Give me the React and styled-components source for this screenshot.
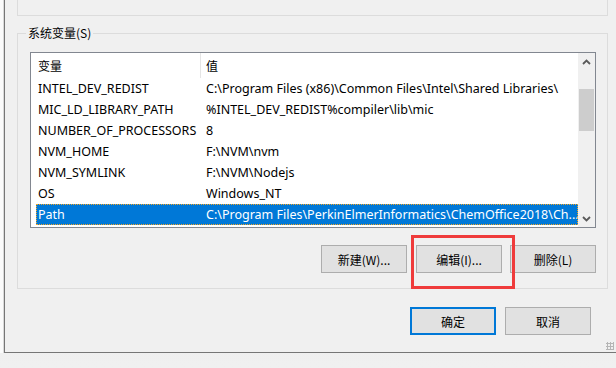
import React from "react";
import styled, { createGlobalStyle } from "styled-components";

const Global = createGlobalStyle`
  html, body { margin: 0; padding: 0; background: #f0f0f0; }
  body { font-family: "Noto Sans", "Noto Sans CJK SC", sans-serif; font-size: 12px; color: #000; }
  * { box-sizing: border-box; }
`;

const Page = styled.div`
  width: 616px;
  height: 368px;
  overflow: hidden;
  display: flex;
  flex-direction: column;
  background: linear-gradient(#c9c9c9, #ececec 60%, #f0f0f0);
`;

const Top = styled.div`
  display: flex;
  height: 353px;
`;

const BackStrip = styled.div`
  width: 4px;
  background: #fbfbfb;
  border-right: 1px solid #d9d9d9;
`;

const Window = styled.div`
  position: relative;
  flex: 1;
  background: #f0f0f0;
  border-left: 1px solid #767676;
  border-bottom: 1px solid #767676;
  padding: 0 8px 0 12px;
  display: flex;
  flex-direction: column;
`;

const PrevGroup = styled.div`
  height: 16px;
  border: 1px solid #dcdcdc;
  border-top: none;
`;

const Group = styled.div`
  position: relative;
  margin-top: 17px;
  border: 1px solid #dcdcdc;
  padding: 18px 11px 15px 12px;
  display: flex;
  flex-direction: column;
`;

const Legend = styled.span`
  position: absolute;
  top: -9px;
  left: 8px;
  padding: 0 2px;
  background: #f0f0f0;
  line-height: 16px;
  font-family: "Noto Sans CJK SC", sans-serif;
`;

const List = styled.div`
  height: 176px;
  border: 1px solid #828790;
  background: #fff;
  display: flex;
`;

const ListBody = styled.div`
  flex: 1;
  padding-left: 5px;
  display: flex;
  flex-direction: column;
  font-size: 12.5px;
`;

const Row = styled.div`
  display: grid;
  grid-template-columns: 164px 1fr;
  height: ${(p) => (p.$header ? "25px" : "21px")};
  align-items: center;
  white-space: nowrap;
  background: ${(p) => (p.$selected ? "#0078d7" : "transparent")};
  color: ${(p) => (p.$selected ? "#fff" : "#000")};
  outline: ${(p) => (p.$selected ? "1px dotted #f5a623" : "none")};
  outline-offset: -1px;
`;

const Cell = styled.div`
  overflow: hidden;
  height: 100%;
  display: flex;
  align-items: center;
  font-family: ${(p) => (p.$cjk ? '"Noto Sans CJK SC", sans-serif' : 'inherit')};
  font-size: ${(p) => (p.$cjk ? "12px" : "inherit")};
  border-left: ${(p) => (p.$divider ? "1px solid #e5e5e5" : "none")};
  padding-left: ${(p) => (p.$divider ? "5px" : p.$second ? "6px" : "2px")};
`;

const Scrollbar = styled.div`
  width: 17px;
  background: #f0f0f0;
  display: flex;
  flex-direction: column;
  align-items: center;
`;

const Arrow = styled.div`
  height: 17px;
  width: 17px;
  display: flex;
  align-items: center;
  justify-content: center;
`;

const Track = styled.div`
  flex: 1;
  width: 100%;
  padding: 19px 1px 0;
`;

const Thumb = styled.div`
  height: 42px;
  background: #cdcdcd;
`;

const ButtonRow = styled.div`
  display: flex;
  justify-content: flex-end;
  gap: 8px;
  margin-top: 17px;
`;

const Button = styled.button`
  width: 86px;
  height: 28px;
  background: #e1e1e1;
  border: ${(p) => (p.$default ? "2px solid #0078d7" : "1px solid #adadad")};
  font-family: "Noto Sans CJK SC", sans-serif;
  font-size: 12px;
  color: #000;
  padding: 0;
  margin-left: ${(p) => p.$ml || 0}px;
`;

const DialogButtons = styled(ButtonRow)`
  margin-top: 18px;
  gap: 9px;
  padding-right: 17px;
`;

const Annotation = styled.div`
  position: absolute;
  left: 406px;
  top: 235px;
  width: 104px;
  height: 54px;
  border: 3px solid #ef3b3b;
  pointer-events: none;
`;

const Grip = styled.div`
  position: absolute;
  right: 2px;
  bottom: 2px;
  width: 8px;
  height: 8px;
  background:
    radial-gradient(circle, #b5b5b5 1.1px, transparent 1.3px) 0 0 / 3px 3px;
`;

const Up = () => (
  <svg width="9" height="6" viewBox="0 0 9 6">
    <path d="M1 5 L4.5 1.5 L8 5" fill="none" stroke="#5a5a5a" strokeWidth="1.8" />
  </svg>
);
const Down = () => (
  <svg width="9" height="6" viewBox="0 0 9 6">
    <path d="M1 1 L4.5 4.5 L8 1" fill="none" stroke="#5a5a5a" strokeWidth="1.8" />
  </svg>
);

const vars = [
  ["INTEL_DEV_REDIST", "C:\\Program Files (x86)\\Common Files\\Intel\\Shared Libraries\\"],
  ["MIC_LD_LIBRARY_PATH", "%INTEL_DEV_REDIST%compiler\\lib\\mic"],
  ["NUMBER_OF_PROCESSORS", "8"],
  ["NVM_HOME", "F:\\NVM\\nvm"],
  ["NVM_SYMLINK", "F:\\NVM\\Nodejs"],
  ["OS", "Windows_NT"],
  ["Path", "C:\\Program Files\\PerkinElmerInformatics\\ChemOffice2018\\Ch...", true],
];

export default function App() {
  return (
    <>
      <Global />
      <Page>
        <Top>
          <BackStrip />
          <Window>
            <PrevGroup />
            <Group>
              <Legend>系统变量(S)</Legend>
              <List>
                <ListBody>
                  <Row $header>
                    <Cell $cjk>变量</Cell>
                    <Cell $cjk $divider>值</Cell>
                  </Row>
                  {vars.map(([k, v, sel]) => (
                    <Row key={k} $selected={sel}>
                      <Cell>{k}</Cell>
                      <Cell $second>{v}</Cell>
                    </Row>
                  ))}
                </ListBody>
                <Scrollbar>
                  <Arrow><Up /></Arrow>
                  <Track><Thumb /></Track>
                  <Arrow><Down /></Arrow>
                </Scrollbar>
              </List>
              <ButtonRow>
                <Button>新建(W)...</Button>
                <Button $ml={1}>编辑(I)...</Button>
                <Button>删除(L)</Button>
              </ButtonRow>
            </Group>
            <DialogButtons>
              <Button $default>确定</Button>
              <Button>取消</Button>
            </DialogButtons>
            <Annotation />
            <Grip />
          </Window>
        </Top>
      </Page>
    </>
  );
}
